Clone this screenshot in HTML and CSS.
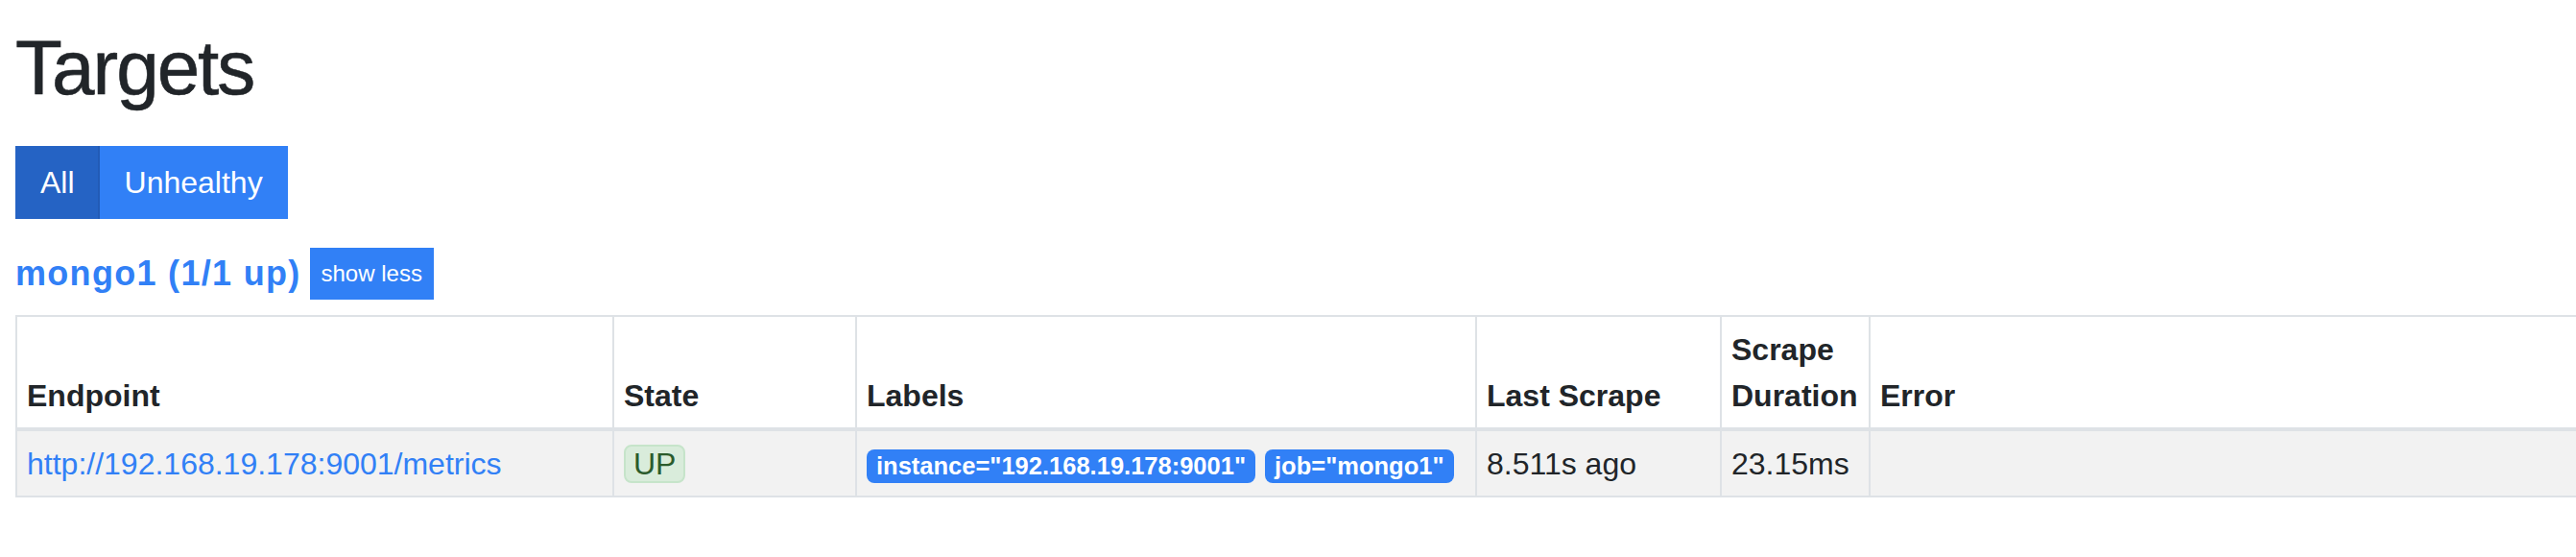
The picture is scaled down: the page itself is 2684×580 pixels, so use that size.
FILE: index.html
```html
<!DOCTYPE html>
<html lang="en">
<head>
<meta charset="utf-8">
<title>Targets</title>
<link rel="stylesheet" href="styles.css">
</head>
<body>
<div class="page">
  <h1 class="title">Targets</h1>
  <div class="btn-group">
    <button class="btn btn-active">All</button>
    <button class="btn">Unhealthy</button>
  </div>
  <div class="pool-header">
    <h2 class="pool-title"><a href="#pool-mongo1">mongo1 (1/1 up)</a></h2>
    <button class="btn-sm">show less</button>
  </div>
  <table class="targets">
    <colgroup>
      <col class="col-endpoint">
      <col class="col-state">
      <col class="col-labels">
      <col class="col-last">
      <col class="col-duration">
      <col class="col-error">
    </colgroup>
    <thead>
      <tr>
        <th>Endpoint</th>
        <th>State</th>
        <th>Labels</th>
        <th>Last Scrape</th>
        <th>Scrape Duration</th>
        <th>Error</th>
      </tr>
    </thead>
    <tbody>
      <tr>
        <td><a class="endpoint" href="#metrics">http://192.168.19.178:9001/metrics</a></td>
        <td><span class="state-up">UP</span></td>
        <td class="labels"><span class="label-badge">instance="192.168.19.178:9001"</span><span class="label-badge">job="mongo1"</span></td>
        <td>8.511s ago</td>
        <td>23.15ms</td>
        <td></td>
      </tr>
    </tbody>
  </table>
</div>
</body>
</html>
```
FILE: styles.css
```css
html, body {
  overflow: hidden;
}
body {
  margin: 0;
  background: #ffffff;
  color: #212529;
  font-family: "Liberation Sans", Arial, sans-serif;
  font-size: 32px;
  line-height: 48px;
}
.page {
  padding: 23px 0 0 16px;
}
.title {
  margin: 0 0 33px;
  font-size: 80px;
  line-height: 96px;
  font-weight: normal;
  letter-spacing: -2px;
  -webkit-text-stroke: 0.6px #212529;
}
.btn-group {
  display: flex;
  margin-bottom: 30px;
}
.btn {
  font-family: inherit;
  font-size: 32px;
  line-height: 48px;
  height: 76px;
  padding: 0 26px;
  margin: 0;
  border: 0;
  border-radius: 0;
  background: #3180f6;
  color: #ffffff;
}
.btn-active {
  background: #2563c4;
  box-shadow: inset -2px 0 0 #225bb6;
}
.pool-header {
  display: flex;
  align-items: center;
  margin-bottom: 16px;
}
.pool-title {
  margin: 0;
  font-size: 36px;
  line-height: 42px;
  font-weight: bold;
  letter-spacing: 1.3px;
}
.pool-title a {
  color: #3180f6;
  text-decoration: none;
}
.btn-sm {
  margin-left: 9px;
  height: 54px;
  padding: 0 12px;
  border: 0;
  border-radius: 0;
  background: #3180f6;
  color: #ffffff;
  font-family: inherit;
  font-size: 24px;
  line-height: 36px;
}
.targets {
  border-collapse: collapse;
  table-layout: fixed;
  width: 2720px;
}
.col-endpoint { width: 622px; }
.col-state { width: 253px; }
.col-labels { width: 646px; }
.col-last { width: 255px; }
.col-duration { width: 155px; }
.targets th,
.targets td {
  border: 2px solid #dee2e6;
  padding: 9.6px 10px;
  text-align: left;
}
.targets th {
  vertical-align: bottom;
  border-bottom-width: 4px;
  font-weight: bold;
}
.targets td {
  vertical-align: top;
}
.targets tbody tr {
  background: #f2f2f2;
}
.endpoint {
  color: #3180f6;
  text-decoration: none;
}
.state-up {
  display: inline-block;
  padding: 0 8px;
  border: 2px solid #c6e4ca;
  border-radius: 8px;
  background: #d9ecdb;
  color: #2b5b2c;
  line-height: 36px;
}
.labels {
  white-space: nowrap;
}
.label-badge {
  display: inline-block;
  margin-right: 10px;
  padding: 6px 10px;
  border-radius: 8px;
  background: #3180f6;
  color: #ffffff;
  font-size: 25.5px;
  font-weight: bold;
  line-height: 23px;
}
```
